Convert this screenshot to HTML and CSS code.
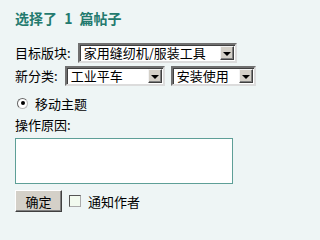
FILE: index.html
```html
<!DOCTYPE html>
<html lang="zh-CN">
<head>
<meta charset="utf-8">
<link rel="stylesheet" href="styles.css">
</head>
<body>
<div class="panel">
  <h1 class="title">选择了 1 篇帖子</h1>
  <div class="row row-first">
    <span class="label">目标版块:</span>
    <span class="combo combo-forum">
      <select class="combo-select"><option>家用缝纫机/服装工具</option></select>
      <span class="combo-btn"><span class="tri"></span></span>
    </span>
  </div>
  <div class="row">
    <span class="label">新分类:</span>
    <span class="combo combo-type">
      <select class="combo-select"><option>工业平车</option></select>
      <span class="combo-btn"><span class="tri"></span></span>
    </span>
    <span class="combo combo-sub">
      <select class="combo-select"><option>安装使用</option></select>
      <span class="combo-btn"><span class="tri"></span></span>
    </span>
  </div>
  <label class="radio-row">
    <input type="radio" class="radio" checked>
    <span>移动主题</span>
  </label>
  <div class="reason-label">操作原因:</div>
  <textarea class="reason"></textarea>
  <div class="actions">
    <button class="btn" type="button">确定</button>
    <label class="check-row">
      <input type="checkbox" class="check">
      <span>通知作者</span>
    </label>
  </div>
</div>
</body>
</html>
```
FILE: styles.css
```css
html, body {
  margin: 0;
  padding: 0;
  background: #eef5f5;
}
body {
  font-family: "Noto Sans CJK SC", "Noto Sans", "DejaVu Sans", sans-serif;
  font-size: 13px;
  color: #000;
}
.panel {
  padding: 9px 0 0 15px;
  display: flex;
  flex-direction: column;
  align-items: flex-start;
}
.title {
  margin: 0;
  font-size: 14px;
  font-weight: bold;
  line-height: 18px;
  color: #237a6e;
  word-spacing: 4px;
}
.row {
  display: flex;
  align-items: center;
  height: 20px;
}
.row-first {
  margin-top: 16px;
  margin-bottom: 3px;
}
.label {
  line-height: 20px;
  margin-right: 7px;
}
.combo {
  display: inline-flex;
  align-items: stretch;
  box-sizing: border-box;
  height: 20px;
  background: #fff;
  border-style: solid;
  border-width: 2px;
  border-color: #707070 #dcdcdc #dcdcdc #707070;
  box-shadow: inset 1px 1px 0 #404040;
  padding: 1px;
}
.combo-forum { width: 159px; }
.combo-type { width: 100px; }
.combo-sub { width: 85px; margin-left: 6px; }
.combo-select {
  appearance: none;
  -webkit-appearance: none;
  border: 0;
  outline: 0;
  background: transparent;
  font: inherit;
  font-size: 13px;
  line-height: 14px;
  padding: 0 0 0 3px;
  margin: 0;
  flex: 1;
  min-width: 0;
  color: #000;
}
.combo-btn {
  flex: none;
  width: 14px;
  box-sizing: border-box;
  background: #d4d0c8;
  border-style: solid;
  border-width: 1px;
  border-color: #f4f4f4 #404040 #404040 #f4f4f4;
  box-shadow: inset -1px -1px 0 #808080;
  display: flex;
  align-items: center;
  justify-content: center;
}
.tri {
  width: 0;
  height: 0;
  border-left: 4px solid transparent;
  border-right: 4px solid transparent;
  border-top: 4px solid #000;
  margin-top: 1px;
}
.radio-row {
  display: flex;
  align-items: center;
  margin-top: 10px;
  height: 14px;
}
.radio {
  appearance: none;
  -webkit-appearance: none;
  width: 11px;
  height: 11px;
  margin: 0 7px 0 2px;
  border-radius: 50%;
  box-sizing: border-box;
  border: 1px solid #666;
  border-right-color: #bbb;
  border-bottom-color: #bbb;
  background: #fff;
  display: flex;
  align-items: center;
  justify-content: center;
}
.radio:checked::after {
  content: "";
  width: 4px;
  height: 4px;
  border-radius: 50%;
  background: #000;
}
.reason-label {
  margin-top: 6px;
  line-height: 17px;
}
.reason {
  margin-top: 5px;
  width: 218px;
  height: 46px;
  box-sizing: border-box;
  border: 1px solid #5e9f97;
  background: #fff;
  resize: none;
  padding: 2px;
  font: inherit;
}
.actions {
  display: flex;
  align-items: center;
  margin-top: 6px;
}
.btn {
  width: 47px;
  height: 22px;
  box-sizing: border-box;
  background: #d4d0c8;
  border-style: solid;
  border-width: 1px;
  border-color: #ffffff #404040 #404040 #ffffff;
  box-shadow: inset -1px -1px 0 #808080;
  font: inherit;
  font-size: 13px;
  padding: 0;
  color: #000;
}
.check-row {
  display: flex;
  align-items: center;
}
.check {
  appearance: none;
  -webkit-appearance: none;
  width: 12px;
  height: 12px;
  margin: 0 7px 0 7px;
  box-sizing: border-box;
  border: 1px solid #555;
  border-right-color: #aaa;
  border-bottom-color: #aaa;
  background: #f2faef;
}
```
